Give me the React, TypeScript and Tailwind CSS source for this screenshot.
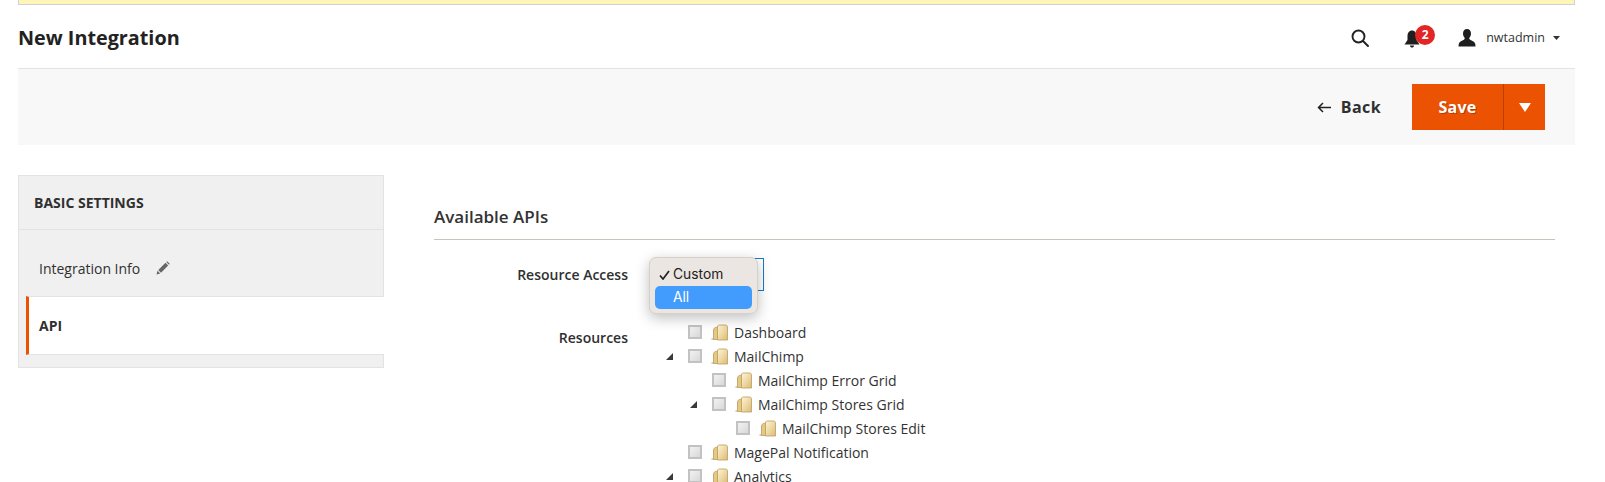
const font = "font-['Open_Sans',sans-serif]";

const tree = [
  { label: "Dashboard", level: 0, open: false },
  { label: "MailChimp", level: 0, open: true },
  { label: "MailChimp Error Grid", level: 1, open: false },
  { label: "MailChimp Stores Grid", level: 1, open: true },
  { label: "MailChimp Stores Edit", level: 2, open: false },
  { label: "MagePal Notification", level: 0, open: false },
  { label: "Analytics", level: 0, open: true },
];

function FolderIcon() {
  return (
    <svg width="17" height="17" viewBox="0 0 17 17" className="-ml-[1px] block shrink-0">
      <defs>
        <linearGradient id="folderFill" x1="0" y1="0" x2="1" y2="1">
          <stop offset="0" stopColor="#fff6d8" />
          <stop offset="1" stopColor="#dcbb74" />
        </linearGradient>
      </defs>
      <ellipse cx="1.600" cy="15" rx="1.500" ry="1" fill="#cfcfcf" />
      <path d="M2.500 15.500V6C2.500 4.500 3.500 4 4.500 3.500L8 2.500V15.500Z" fill="#e6c883" stroke="#bb9c5a" strokeWidth="0.8" />
      <path d="M6.500 16V3C6.500 1.500 7.500 1 8.500 1H14.500C15.700 1 16.500 1.800 16.500 3V16Z" fill="url(#folderFill)" stroke="#bb9c5a" strokeWidth="0.8" />
    </svg>
  );
}

function TreeRow({ label, level, open }: { label: string; level: number; open: boolean }) {
  const indent = level === 0 ? "ml-0" : level === 1 ? "ml-[24px]" : "ml-[48px]";
  return (
    <div className={`flex h-[24px] items-center ${indent}`}>
      <div className="flex w-[22px] shrink-0 items-center">
        {open && (
          <svg width="7" height="7" viewBox="0 0 7 7">
            <path d="M7 0V7H0Z" fill="#3a3a3a" />
          </svg>
        )}
      </div>
      <span className="h-[14px] w-[14px] shrink-0 border-2 border-[#c2c2c2] bg-gradient-to-br from-[#f2f2f2] to-[#d8d8d8]" />
      <span className="ml-[10px]">
        <FolderIcon />
      </span>
      <span className="ml-[6px] whitespace-nowrap text-[14px] text-[#333]">{label}</span>
    </div>
  );
}

export default function App() {
  return (
    <div className={`h-[482px] w-[1605px] overflow-hidden bg-white ${font}`}>
      <div className="ml-[18px] mr-[30px]">
        <div className="h-[5px] border-x border-b border-[#d1d1d1] bg-[#fdf6b8]" />

        <div className="flex h-[64px] items-center justify-between border-b border-[#e3e3e3] pt-[3px]">
          <h1 className="text-[19.800px] font-bold text-[#222]">New Integration</h1>
          <div className="mr-[15px] flex items-center">
            <svg width="18" height="18" viewBox="0 0 18 18" fill="none" stroke="#222" strokeWidth="1.900">
              <circle cx="7.500" cy="7.500" r="6" />
              <path d="M12 12L17 17" strokeLinecap="round" />
            </svg>
            <div className="relative ml-[35px] mt-[1px] h-[18px] w-[16px]">
              <svg width="16" height="18" viewBox="0 0 16 18" fill="#1f1f1f">
                <path d="M8 0.500C5 0.500 3.500 3 3.500 6V10L0.500 14.500H15.500L12.500 10V6C12.500 3 11 0.500 8 0.500Z" />
                <path d="M6 15.500H10C10 17 9 17.500 8 17.500S6 17 6 15.500Z" />
              </svg>
              <span className="absolute left-[11px] top-[-5px] flex h-[20px] w-[20px] items-center justify-center rounded-full bg-[#e22626] text-[12px] font-bold text-white">
                2
              </span>
            </div>
            <svg className="ml-[38px]" width="18" height="18" viewBox="0 0 18 18" fill="#1f1f1f">
              <path d="M9 0C6.500 0 5 2 5 4.500C5 6.500 6 8 6.800 9C6.800 10.500 5.500 11 3.500 12C1.500 13 0.500 14 0.500 17.500H17.500C17.500 14 16.500 13 14.500 12C12.500 11 11.200 10.500 11.200 9C12 8 13 6.500 13 4.500C13 2 11.500 0 9 0Z" />
            </svg>
            <span className="ml-[10px] text-[12.500px] text-[#333]">nwtadmin</span>
            <svg className="ml-[8px]" width="7" height="4" viewBox="0 0 7 4" fill="#333">
              <path d="M0 0H7L3.500 4Z" />
            </svg>
          </div>
        </div>

        <div className="flex h-[76px] items-center justify-end bg-[#f8f8f8] pr-[30px]">
          <svg width="14" height="11" viewBox="0 0 14 11" fill="none" stroke="#222" strokeWidth="1.500">
            <path d="M14 5.500H1.500M6 1L1.500 5.500L6 10" />
          </svg>
          <span className="ml-[10px] text-[16px] font-bold tracking-[0.4px] text-[#303030]">Back</span>
          <div className="ml-[31px] flex h-[46px] w-[133px] items-stretch bg-[#eb5202] text-white">
            <span className="flex w-[91px] items-center justify-center text-[16px] font-bold tracking-[0.3px] [text-shadow:1px_1px_0_rgba(0,0,0,0.25)]">
              Save
            </span>
            <span className="flex flex-1 items-center justify-center border-l border-[#b84002]">
              <svg width="12" height="9" viewBox="0 0 12 9" fill="#fff">
                <path d="M0 0H12L6 9Z" />
              </svg>
            </span>
          </div>
        </div>

        <div className="mt-[30px] flex items-start">
          <aside className="w-[366px] shrink-0 border border-[#e3e3e3] bg-[#f0f0f0] text-[#303030]">
            <div className="flex h-[54px] items-center border-b border-[#e3e3e3] pl-[15px] text-[14px] font-bold">
              BASIC SETTINGS
            </div>
            <div className="flex h-[66px] items-center pl-[20px] pt-[10px] text-[14px]">
              Integration Info
              <svg className="ml-[16px]" width="14" height="14" viewBox="0 0 14 14" fill="#666">
                <path d="M0.500 13.500L1.500 9.800L4.200 12.500Z" />
                <path d="M2.300 9L9.500 1.800L12.200 4.500L5 11.700Z" />
                <path d="M10.300 1L11.200 0.300L13.700 2.800L13 3.700Z" />
              </svg>
            </div>
            <div className="-mr-px ml-[7px] flex h-[59px] items-center border-y border-l-[3px] border-[#e3e3e3] border-l-[#eb5202] bg-white pl-[10px] text-[14px] font-bold">
              API
            </div>
            <div className="h-[12px]" />
          </aside>

          <section className="ml-[50px] flex-1 pr-[20px] pt-[30px]">
            <h2 className="border-b border-[#cac3bb] pb-[10px] text-[17px] leading-[24px] font-semibold text-[#333]">
              Available APIs
            </h2>
            <div className="mt-[18px] flex">
              <div className="w-[194px] pt-[6px] text-right text-[14px] font-semibold text-[#303030]">
                Resource Access
              </div>
              <div className="relative ml-[32px] h-[33px] w-[104px] border border-[#1979c3] bg-white">
                <div className="absolute left-[-12px] top-[-2px] z-10 h-[57px] w-[109px] rounded-[7px] border border-[#d5d0ca] bg-[#ebe6e2] px-[5px] pt-[5px] font-['Inter',sans-serif] text-[13.800px] text-[#222] shadow-[0_4px_14px_rgba(0,0,0,0.25)]">
                  <div className="flex h-[23px] items-center">
                    <svg className="ml-[4px] mr-[3px]" width="11" height="10" viewBox="0 0 11 10" fill="none" stroke="#222" strokeWidth="1.700">
                      <path d="M1 5.500L4 9L10 1" />
                    </svg>
                    <span>Custom</span>
                  </div>
                  <div className="flex h-[23px] items-center rounded-[5px] bg-[#429cfd] pl-[18px] text-white">All</div>
                </div>
              </div>
            </div>
            <div className="mt-[29px] flex">
              <div className="w-[194px] pt-[7px] text-right text-[14px] font-semibold text-[#303030]">Resources</div>
              <div className="ml-[38px]">
                {tree.map((row) => (
                  <TreeRow key={row.label} label={row.label} level={row.level} open={row.open} />
                ))}
              </div>
            </div>
          </section>
        </div>
      </div>
    </div>
  );
}
